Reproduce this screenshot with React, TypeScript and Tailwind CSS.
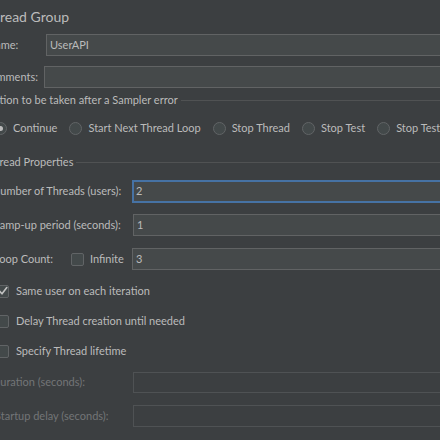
import React from "react";

const font = { fontFamily: "Lato, 'Noto Sans', sans-serif" };

function Radio({ checked }: { checked?: boolean }) {
  return (
    <span className="relative flex h-[13px] w-[13px] shrink-0 items-center justify-center rounded-full border border-[#616466] bg-[#43494a]">
      {checked && <span className="h-[5px] w-[5px] rounded-full bg-[#bcbcbc]" />}
    </span>
  );
}

function Check({ checked }: { checked?: boolean }) {
  return (
    <span className="relative flex h-[13px] w-[13px] shrink-0 items-center justify-center rounded-[2px] border border-[#616466] bg-[#43494a]">
      {checked && (
        <svg width="12" height="12" viewBox="0 0 12 12" className="absolute">
          <polyline points="2.5,6 5,8.8 9.8,2.6" fill="none" stroke="#c2c2c2" strokeWidth="1.6" strokeLinecap="round" strokeLinejoin="round" />
        </svg>
      )}
    </span>
  );
}

function Field({ value, h = "h-[22px]", focused, disabled }: { value?: string; h?: string; focused?: boolean; disabled?: boolean }) {
  const cls = focused
    ? "border-2 border-[#4672a4] bg-[#45494a] pl-[2px]"
    : disabled
    ? "border border-[#4f5254] bg-[#3c3f41] pl-[3px]"
    : "border border-[#616364] bg-[#45494a] pl-[3px]";
  return (
    <div className={`flex flex-1 items-center text-[11px] text-[#bbbbbb] ${h} ${cls}`}>{value}</div>
  );
}

function TitledLine({ title }: { title: string }) {
  return (
    <div className="flex h-[24px] items-center pl-[7px] text-[11px] text-[#bbbbbb]">
      <span className="whitespace-nowrap">{title}</span>
      <div className="ml-[3px] h-px flex-1 bg-[#505253]" />
    </div>
  );
}

export default function App() {
  const radios = ["Continue", "Start Next Thread Loop", "Stop Thread", "Stop Test", "Stop Test Now"];
  return (
    <div className="h-[440px] w-[440px] overflow-hidden bg-[#3c3f41] text-[#bbbbbb]" style={font}>
      <div className="ml-[-20px] flex w-[800px] flex-col">
        <div className="h-[34px] whitespace-nowrap pl-[4px] text-[14px] leading-[34px] text-[#bbbbbb]">Thread Group</div>

        <div className="flex h-[22px] items-center text-[11px]">
          <div className="w-[66px] shrink-0 whitespace-nowrap pl-[7px]">Name:</div>
          <Field value="UserAPI" />
        </div>
        <div className="mt-[10px] flex h-[22px] items-center text-[11px]">
          <div className="w-[64px] shrink-0 whitespace-nowrap pl-[3px]">Comments:</div>
          <Field />
        </div>

        <TitledLine title="Action to be taken after a Sampler error" />

        <div className="flex h-[32px] items-center pl-[14px] text-[11px]">
          {radios.map((r, i) => (
            <div key={r} className="mr-[12px] flex items-center gap-[6px] whitespace-nowrap">
              <Radio checked={i === 0} />
              <span>{r}</span>
            </div>
          ))}
        </div>

        <div className="mt-[6px]">
          <TitledLine title="Thread Properties" />
        </div>

        <div className="mt-[6px] flex h-[23px] items-center text-[11px]">
          <div className="w-[152px] shrink-0 whitespace-nowrap pl-[12px]">Number of Threads (users):</div>
          <Field value="2" h="h-[23px]" focused />
        </div>
        <div className="mt-[11px] flex h-[22px] items-center text-[11px]">
          <div className="w-[153px] shrink-0 whitespace-nowrap pl-[13px]">Ramp-up period (seconds):</div>
          <Field value="1" />
        </div>
        <div className="mt-[12px] flex h-[22px] items-center text-[11px]">
          <div className="flex w-[152px] shrink-0 items-center whitespace-nowrap pl-[14px]">
            <span className="w-[77px]">Loop Count:</span>
            <Check />
            <span className="ml-[6px]">Infinite</span>
          </div>
          <Field value="3" />
        </div>

        <div className="mt-[6px] flex flex-col text-[11px]">
          <div className="flex h-[30px] items-center gap-[7px] pl-[16px]">
            <Check checked />
            <span>Same user on each iteration</span>
          </div>
          <div className="flex h-[30px] items-center gap-[7px] pl-[16px]">
            <Check />
            <span>Delay Thread creation until needed</span>
          </div>
          <div className="flex h-[30px] items-center gap-[7px] pl-[16px]">
            <Check />
            <span>Specify Thread lifetime</span>
          </div>
        </div>

        <div className="mt-[6px] flex h-[21px] items-center text-[11px] text-[#737577]">
          <div className="w-[153px] shrink-0 whitespace-nowrap pl-[12px]">Duration (seconds):</div>
          <Field h="h-[21px]" disabled />
        </div>
        <div className="mt-[12px] flex h-[22px] items-center text-[11px] text-[#737577]">
          <div className="w-[153px] shrink-0 whitespace-nowrap pl-[15px]">Startup delay (seconds):</div>
          <Field disabled />
        </div>
      </div>
    </div>
  );
}
